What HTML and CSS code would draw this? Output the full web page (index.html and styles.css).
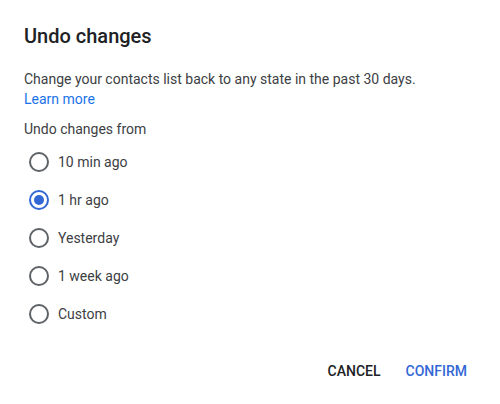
FILE: index.html
```html
<!DOCTYPE html>
<html>
<head>
<meta charset="utf-8">
<link rel="stylesheet" href="styles.css">
</head>
<body>
<div class="dialog">
  <h1 class="title">Undo changes</h1>
  <p class="desc">Change your contacts list back to any state in the past 30 days.<br><a class="link" href="#">Learn more</a></p>
  <div class="label">Undo changes from</div>
  <div class="options">
    <label class="option"><span class="radio"></span><span class="opt-text">10 min ago</span></label>
    <label class="option"><span class="radio checked"></span><span class="opt-text">1 hr ago</span></label>
    <label class="option"><span class="radio"></span><span class="opt-text">Yesterday</span></label>
    <label class="option"><span class="radio"></span><span class="opt-text">1 week ago</span></label>
    <label class="option"><span class="radio"></span><span class="opt-text">Custom</span></label>
  </div>
  <div class="actions">
    <button class="btn btn-cancel">Cancel</button>
    <button class="btn btn-confirm">Confirm</button>
  </div>
</div>
</body>
</html>
```
FILE: styles.css
```css
html, body {
  margin: 0;
  padding: 0;
  background: #ffffff;
}
body {
  font-family: Roboto, "Noto Sans", Arial, sans-serif;
  color: #3c4043;
}
.dialog {
  width: 500px;
  height: 404px;
  box-sizing: border-box;
  padding: 24px 24px 0 24px;
  border-radius: 2px;
  background: #fff;
  display: flex;
  flex-direction: column;
}
.title {
  margin: 0;
  font-size: 20px;
  line-height: 24px;
  font-weight: 500;
  color: #202124;
}
.desc {
  margin: 21px 0 0 0;
  font-size: 14px;
  line-height: 20px;
  color: #3c4043;
}
.link {
  color: #1a73e8;
  text-decoration: none;
}
.label {
  margin-top: 10px;
  font-size: 14px;
  line-height: 20px;
  color: #3c4043;
}
.options {
  display: flex;
  flex-direction: column;
  margin-top: 4px;
}
.option {
  display: flex;
  align-items: center;
  height: 38px;
  font-size: 14px;
  color: #3c4043;
}
.radio {
  width: 16px;
  height: 16px;
  border: 2px solid #5f6368;
  border-radius: 50%;
  margin-left: 5px;
  margin-right: 9px;
  box-sizing: content-box;
  display: flex;
  align-items: center;
  justify-content: center;
}
.radio.checked {
  border-color: #3367d6;
}
.radio.checked::after {
  content: "";
  width: 10px;
  height: 10px;
  border-radius: 50%;
  background: #3367d6;
}
.actions {
  display: flex;
  justify-content: flex-end;
  gap: 9px;
  margin-top: 20px;
  margin-right: 1px;
}
.btn {
  font-family: Roboto, "Noto Sans", Arial, sans-serif;
  font-size: 14px;
  font-weight: 500;
  text-transform: uppercase;
  letter-spacing: 0;
  height: 36px;
  padding: 0 8px;
  border: none;
  background: transparent;
  border-radius: 4px;
}
.btn-cancel {
  color: #202124;
}
.btn-confirm {
  color: #3367d6;
}
```
